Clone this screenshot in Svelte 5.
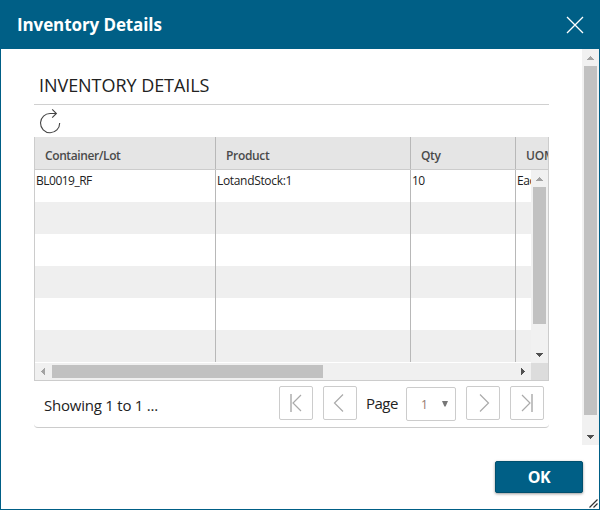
<script>
  const columns = [
    { title: 'Container/Lot', width: 181, value: 'BL0019_RF', spacing: -0.4, cell: -0.5 },
    { title: 'Product', width: 195, value: 'LotandStock:1', spacing: -0.33, cell: -0.33 },
    { title: 'Qty', width: 105, value: '10', spacing: -0.35, cell: -0.5 },
    { title: 'UOM', width: 33, value: 'Each', spacing: -0.2, cell: -0.4 }
  ];
  const rows = [0, 1, 2, 3, 4, 5];
</script>

{#snippet arrow(dir)}
  <svg class="arrow {dir}" width="17" height="17" viewBox="0 0 17 17" shape-rendering="crispEdges">
    {#if dir === 'up'}<path d="M5 11h7v-1h-1v-1h-1v-1h-1v-1h-1v1h-1v1h-1v1h-1z" />
    {:else if dir === 'down'}<path d="M5 7h7v1h-1v1h-1v1h-1v1h-1v-1h-1v-1h-1v-1h-1z" />
    {:else if dir === 'left'}<path d="M10 5v7h-1v-1h-1v-1h-1v-1h-1v-1h1v-1h1v-1h1v-1z" />
    {:else}<path d="M7 5v7h1v-1h1v-1h1v-1h1v-1h-1v-1h-1v-1h-1v-1z" />{/if}
  </svg>
{/snippet}

<div class="dialog">
  <header>
    <h1>Inventory Details</h1>
    <svg class="close" width="18" height="18" viewBox="0 0 18 18"><path d="M1 1l16 16M17 1L1 17" /></svg>
  </header>
  <div class="body">
    <main>
      <h2>INVENTORY DETAILS</h2>
      <div class="toolbar">
        <svg width="24" height="26" viewBox="0 0 24 26"><path d="M17.2 5.500H11.500A9.600 9.600 0 1 0 20.700 15M13.200 1.300l4.200 4.200-4.200 4.200" /></svg>
      </div>
      <div class="grid">
        <div class="row head">
          {#each columns as c}
            <div class="cell" style="width:{c.width}px;letter-spacing:{c.spacing}px">{c.title}</div>
          {/each}
        </div>
        <div class="view">
          <div class="rows">
            {#each rows as r}
              <div class="row data">
                {#each columns as c}
                  <div class="cell" style="width:{c.width}px;letter-spacing:{c.cell}px">{r === 0 ? c.value : ''}</div>
                {/each}
              </div>
            {/each}
          </div>
          <div class="vbar">
            {@render arrow('up')}
            <div class="thumb"></div>
            <div class="fill"></div>
            {@render arrow('down')}
          </div>
        </div>
        <div class="hbar">
          {@render arrow('left')}
          <div class="hthumb"></div>
          <div class="fill"></div>
          {@render arrow('right')}
          <div class="corner"></div>
        </div>
      </div>
      <div class="pager">
        <span class="showing">Showing 1 to 1 ...</span>
        <button aria-label="First"><svg width="32" height="32" viewBox="0 0 32 32"><path class="bar" d="M11 7v18" /><path d="M21 8l-8 8 8 8" /></svg></button>
        <button class="prev" aria-label="Previous"><svg width="32" height="32" viewBox="0 0 32 32"><path d="M19 7.500l-8.500 8.500 8.500 8.500" /></svg></button>
        <span class="page">Page</span>
        <div class="select"><span>1</span><svg width="8" height="6" viewBox="0 0 8 6"><path d="M1 0h6L4.600 5.500h-1.200z" /></svg></div>
        <button class="next" aria-label="Next"><svg width="32" height="32" viewBox="0 0 32 32"><path d="M13 7.500l8.500 8.500-8.500 8.500" /></svg></button>
        <button class="last" aria-label="Last"><svg width="32" height="32" viewBox="0 0 32 32"><path d="M11 8l8 8-8 8" /><path class="bar" d="M21 7v18" /></svg></button>
      </div>
    </main>
    <div class="vbar outer">
      {@render arrow('up')}
      <div class="thumb"></div>
      <div class="fill"></div>
      {@render arrow('down')}
    </div>
  </div>
  <footer><button class="ok"><span>OK</span></button></footer>
  <svg class="grip" width="10" height="10" viewBox="0 0 10 10"><path d="M0.500 8.500L8.500 0.500M4.500 8.500L8.500 4.500" /></svg>
</div>

<style>
  .dialog {
    position: relative;
    box-sizing: border-box;
    width: 600px;
    height: 510px;
    border: 1px solid #005f86;
    background: #fff;
    display: flex;
    flex-direction: column;
    overflow: hidden;
    font-family: "Open Sans", "Noto Sans", sans-serif;
    color: #222;
    white-space: nowrap;
  }
  svg { display: block; flex: none; fill: none; }
  header {
    height: 48px;
    flex: none;
    background: #005f86;
    display: flex;
    align-items: center;
    justify-content: space-between;
    padding: 0 15px 0 16px;
  }
  h1 { margin: 0; color: #fff; font-size: 17px; line-height: 24px; font-weight: 700; letter-spacing: -0.1px; }
  .close { stroke: #fff; stroke-width: 1.3; }
  .body { height: 396px; flex: none; display: flex; justify-content: space-between; }
  main { width: 515px; margin-left: 33px; }
  h2 {
    box-sizing: border-box;
    margin: 0;
    height: 56px;
    padding: 24px 0 0 5px;
    border-bottom: 1px solid #d0d0d0;
    font-size: 18px;
    line-height: 24px;
    font-weight: 400;
    letter-spacing: -0.05px;
  }
  .toolbar { box-sizing: border-box; display: flex; height: 32px; padding-left: 5px; }
  .toolbar svg { stroke: #444; stroke-width: 1.1; margin-top: 3px; }
  .grid {
    box-sizing: border-box;
    height: 244px;
    border: 1px solid #ccc;
    border-top: 0;
    overflow: hidden;
  }
  .row { display: flex; overflow: hidden; }
  .cell { box-sizing: border-box; flex: none; border-right: 1px solid #b8b8b8; overflow: hidden; }
  .cell:last-child { border-right: 0; }
  .head { box-sizing: border-box; height: 33px; background: #e5e5e5; border-bottom: 1px solid #ccc; }
  .head .cell { padding: 8px 0 0 10px; height: 32px; color: #4a4a4a; font-size: 12px; line-height: 21px; font-weight: 600; }
  .view { display: flex; height: 193px; }
  .rows { width: 497px; overflow: hidden; }
  .data { height: 32px; }
  .data:nth-child(even) { background: #efefef; }
  .data .cell { padding-left: 1px; font-size: 12px; line-height: 22px; height: 32px; }
  .vbar { width: 17px; height: 193px; background: #f1f1f1; display: flex; flex-direction: column; }
  .thumb { width: 13px; height: 137px; flex: none; margin-left: 2px; background: #c1c1c1; }
  .fill { flex: 1; }
  .outer { height: 396px; }
  .outer .thumb { height: 349px; }
  .hbar { height: 17px; background: #f0f0f0; display: flex; align-items: center; }
  .hthumb { width: 271px; height: 13px; background: #c1c1c1; }
  .corner { width: 17px; height: 17px; background: #dcdcdc; }
  .arrow.up, .arrow.left { fill: #a3a3a3; }
  .arrow.down, .arrow.right { fill: #505050; }
  .pager {
    box-sizing: border-box;
    height: 47px;
    border-bottom: 1px solid #ccc;
    border-radius: 0 0 4px 4px;
    display: flex;
    align-items: flex-start;
    padding: 5px 5px 0 10px;
  }
  .showing { width: 235px; font-size: 15px; line-height: 39px; letter-spacing: -0.23px; }
  .pager button {
    box-sizing: border-box;
    width: 34px;
    height: 34px;
    flex: none;
    padding: 0;
    border: 1px solid #ccc;
    border-radius: 2px;
    background: #fff;
  }
  .pager button path { stroke: #aaa; stroke-width: 1.2; }
  .pager button .bar { stroke: #c2c2c2; stroke-width: 2; }
  .pager .prev, .pager .next, .pager .last { margin-left: 10px; }
  .page { width: 49px; box-sizing: border-box; padding-left: 9px; font-size: 15px; line-height: 35px; letter-spacing: -0.5px; }
  .select {
    box-sizing: border-box;
    width: 50px;
    height: 34px;
    flex: none;
    margin-top: 1px;
    padding: 0 6px 0 14px;
    border: 1px solid #ccc;
    border-radius: 2px;
    display: flex;
    justify-content: space-between;
    align-items: center;
    font-size: 12px;
    color: #947b70;
  }
  .select svg { fill: #777; margin-bottom: 1px; }
  footer { display: flex; justify-content: flex-end; padding: 16px 16px 0 0; }
  .ok {
    box-sizing: border-box;
    width: 88px;
    height: 32px;
    padding: 0;
    border: 1px solid #00506f;
    border-radius: 2px;
    background: #005f86;
    box-shadow: 0 1px 3px rgba(0, 0, 0, 0.4);
    color: #fff;
    font: 700 16px/30px "Open Sans", "Noto Sans", sans-serif;
    letter-spacing: -0.4px;
  }
  .grip { position: absolute; right: 0; bottom: 0; stroke: #333; stroke-width: 1.2; }
  :global(body) { margin: 0; background: #fff; }
</style>
